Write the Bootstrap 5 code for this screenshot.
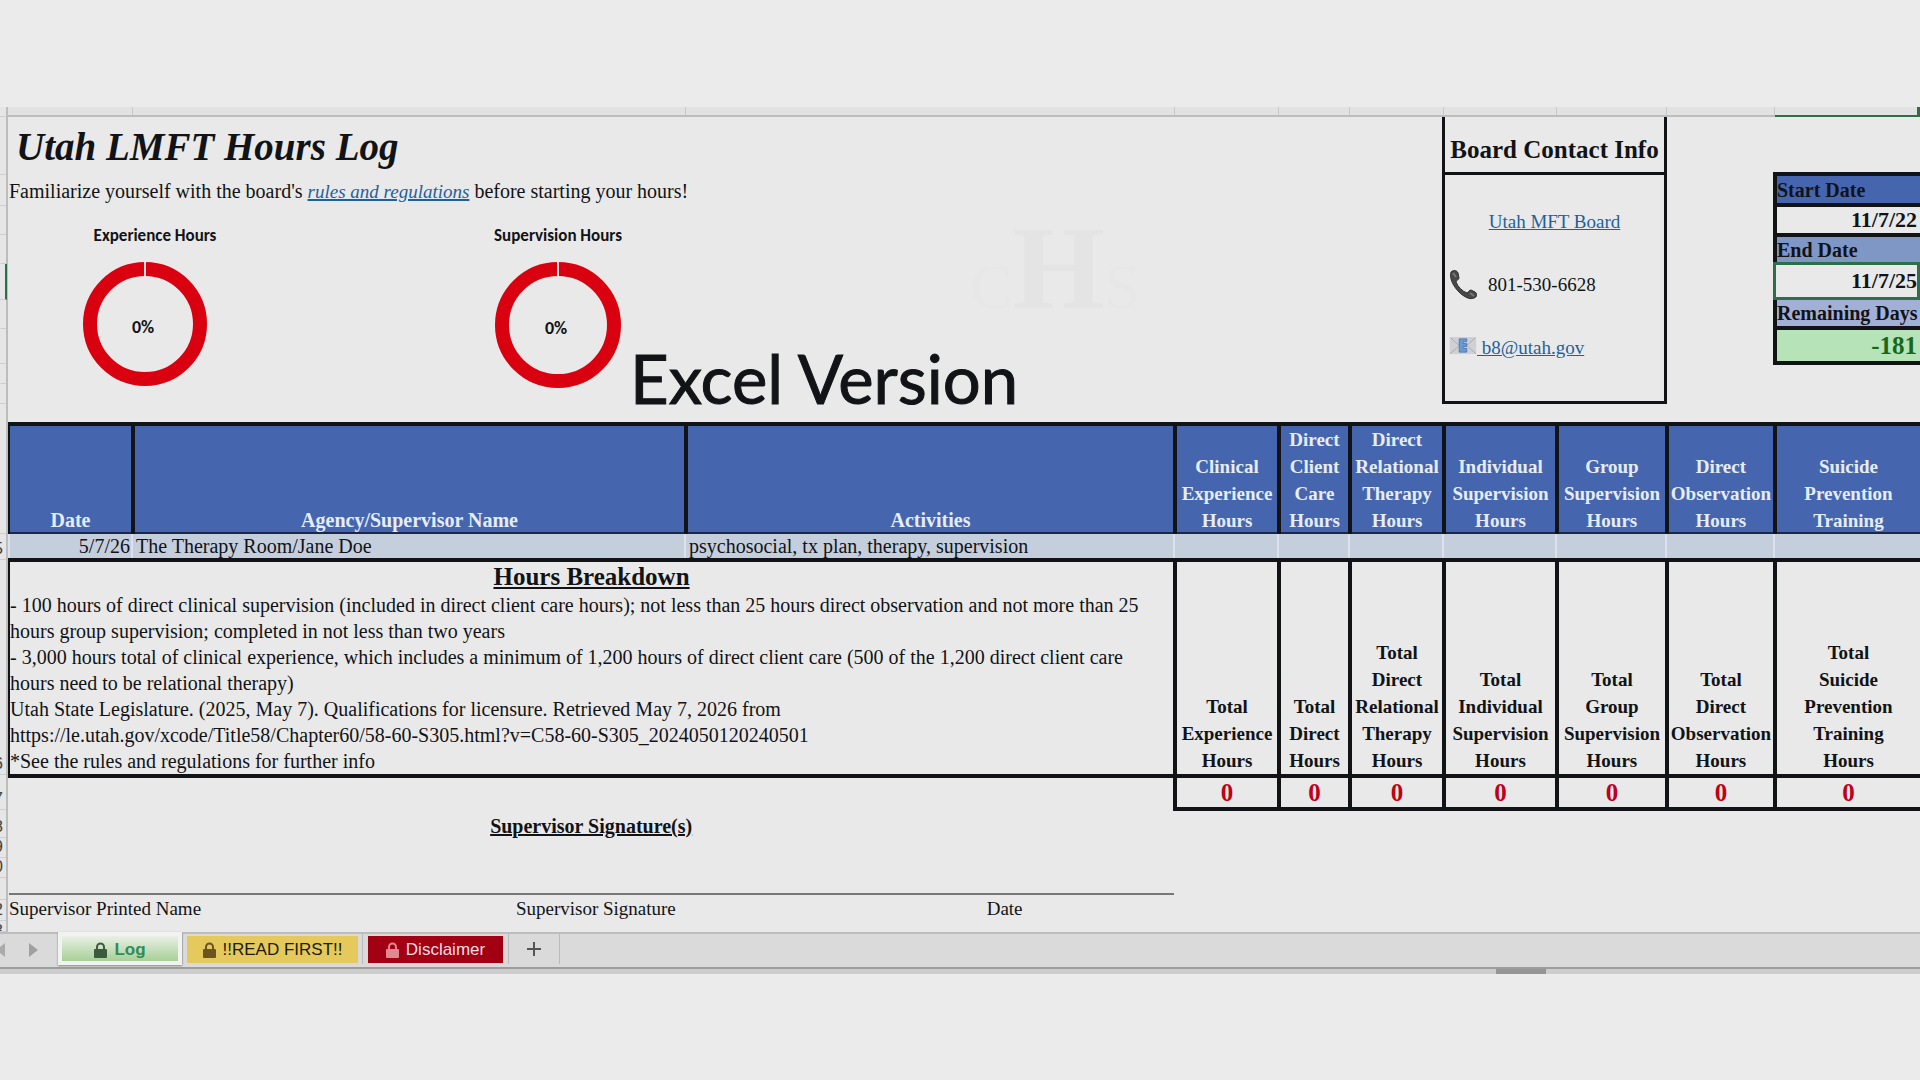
<!DOCTYPE html>
<html lang="en">
<head>
<meta charset="utf-8">
<meta name="viewport" content="width=device-width, initial-scale=1">
<title>Utah LMFT Hours Log</title>
<link href="https://cdn.jsdelivr.net/npm/bootstrap@5.3.0/dist/css/bootstrap.min.css" rel="stylesheet">
<style>
  :root { --ink: #111316; --sheet: #e9e9e9; --blue: #4565ae; --rule: #bdbdbd; --xl-green: #2d7048; --anchor: #1f5f9e; }
  body { background: #ebebeb; color: var(--ink); font-family: "Liberation Serif", serif; font-size: 19px; line-height: 26px; padding-top: 107px; overflow-x: hidden; }
  a { color: var(--anchor); }
  .workbook { background: var(--sheet); }

  /* row-number gutter */
  .gutter { width: 8px; border-right: 2px solid var(--rule); background: #e6e6e6; font: 17px/20px "Liberation Sans", sans-serif; color: #444; }
  .gutter div { display: flex; justify-content: flex-end; align-items: flex-end; overflow: hidden; border-bottom: 1px solid #cfcfcf; padding-right: 3px; }
  .gutter .picked { border-right: 2px solid var(--xl-green); margin-right: -1px; }

  /* shared column tracks */
  .col-strip { display: grid; grid-template-columns: 125fr 553fr 489fr 104fr 71fr 94fr 113fr 110fr 108fr 145fr; height: 10px; background: #e2e2e2; border-bottom: 2px solid var(--rule); }
  .col-strip span { border-right: 1px solid #c8c8c8; }
  .col-strip .picked { border-right: 3px solid var(--xl-green); border-bottom: 2px solid var(--xl-green); margin-bottom: -2px; }
  .top-area { display: grid; grid-template-columns: minmax(0, 1434fr) minmax(0, 225fr) minmax(0, 106fr) minmax(0, 147fr); height: 305px; }

  .sheet-title { font: italic 700 39px/56px "Monotype Corsiva", "Apple Chancery", "Liberation Serif", serif; margin: 0; padding: 2px 0 0 8px; }
  .intro-line { font-size: 20px; padding-left: 1px; margin: 3px 0 0; }
  .intro-line em { font-size: 19px; }
  .charts { padding-left: 75px; padding-top: 18px; }
  .charts figure { margin: 0; }
  .charts figcaption { font: 700 17px/26px Carlito, Lato, sans-serif; display: flex; justify-content: center; white-space: nowrap; }
  .chart-a { width: 144px; margin-right: 268px !important; }
  .chart-b { width: 126px; }
  .charts svg { display: block; margin-top: 13px; }
  .charts svg text { font: 700 18px Carlito, Lato, sans-serif; fill: var(--ink); text-anchor: middle; }
  .version-label { font: 67px/84px Lato, sans-serif; margin: 113px 0 0 9px; white-space: nowrap; -webkit-text-stroke: 1px var(--ink); }
  .watermark { position: absolute; left: 962px; top: 102px; font-size: 64px; line-height: 120px; color: #e7e7e7; }
  .watermark b { font-size: 118px; color: #e4e4e4; }

  .board-box { border: 3px solid var(--ink); border-top: 0; height: 287px; }
  .board-box h2 { font-size: 25px; line-height: 50px; height: 58px; font-weight: 700; text-align: center; margin: 0; padding-top: 8px; border-bottom: 3px solid var(--ink); white-space: nowrap; }
  .board-lines { padding: 34px 4px 0; gap: 37px; }
  .board-lines > * { height: 26px; }
  .phone-number { padding-left: 11px; }

  .dates { margin-top: 55px; width: 100%; border-collapse: separate; border-spacing: 0; font-weight: 700; font-size: 20px; line-height: 24px; }
  .dates th, .dates td { padding: 0 2px 0 0; border: 0 solid var(--ink); border-top-width: 4px; border-left-width: 4px; white-space: nowrap; vertical-align: middle; }
  .dates td { text-align: right; font-size: 22px; padding-right: 3px; }
  .dates .picked { border: 3px solid var(--xl-green); padding-right: 0; }
  .dates .days-left { background: #b6e3b8; color: #16691c; font-size: 25px; border-bottom-width: 4px; }

  /* hours table */
  .hours { width: 100%; table-layout: fixed; border-collapse: separate; border-spacing: 0; }
  .hours th, .hours td { padding: 0; border: 0 solid var(--ink); vertical-align: bottom; }
  .hours th { text-align: center; font-weight: 700; line-height: 27px; border-top-width: 4px; border-left-width: 4px; }
  .hours thead th { background: var(--blue); color: #e6edf8; height: 112px; box-shadow: inset 0 -2px #1a2746; }
  .hours thead .wide-head { font-size: 20px; }
  .hours th:first-child, .hours td:first-child { border-left-width: 2px; }
  .entry td { background: #c5cedd; height: 24px; line-height: 24px; font-size: 20px; border-left: 1px solid #dbe2ec; overflow: hidden; white-space: nowrap; }
  .entry td:first-child { padding-right: 1px; }
  .entry td + td { padding-left: 3px; border-left-width: 2px; }
  .hours .breakdown { border-top-width: 4px; height: 216px; font-size: 20px; }
  .breakdown h2, .sign-title { font-size: 25px; line-height: 30px; font-weight: 700; text-align: center; text-decoration: underline; margin: 0; }
  .breakdown p { margin: 0; }
  .totals td { border-width: 4px 0 4px 4px; height: 37px; text-align: center; vertical-align: middle; color: #c00018; font-weight: 700; font-size: 25px; line-height: 29px; }
  .totals td:first-child { border-width: 4px 0 0; }

  .sign { height: 121px; width: 61%; }
  .sign .sign-title { font-size: 20px; }
  .sign-rule { border-top: 2px solid #777; margin: 52px 0 1px 1px; }
  .sign-cells { padding-left: 1px; }

  /* sheet tabs */
  .tabbar { height: 37px; background: #dadada; border-top: 2px solid var(--rule); border-bottom: 2px solid #9c9c9c; }
  .tabbar button { border: 0; padding: 0; background: none; font: 17px/23px "Liberation Sans", sans-serif; display: flex; align-items: center; justify-content: center; gap: 7px; white-space: nowrap; }
  .tab-slot { border-right: 1px solid #bbb; height: 30px; }
  .tabbar .tab-log { width: 124px; height: 33px; margin-top: -2px; padding-top: 2px; border: 4px solid #f2f2f2; box-shadow: 0 1px 2px #888; background: linear-gradient(#e9f0e4, #a8cf97); color: #318b56; font-weight: 700; }
  .tabbar .tab-read { width: 171px; height: 27px; background: #e5c95d; color: #1c1a10; margin: 2px 4px 0; }
  .tabbar .tab-disc { width: 135px; height: 27px; background: #a20013; color: #f5dfe0; margin: 2px 5px 0; }
  .tabbar .tab-add { width: 50px; height: 30px; }
  .tabbar .nav-arrow { width: 29px; height: 32px; }
  .hscroll { height: 5px; background: #cdcdcd; padding-left: 77.9%; }
  .hscroll div { width: 50px; height: 5px; background: #959595; }
</style>
<script src="https://cdn.jsdelivr.net/npm/bootstrap@5.3.0/dist/js/bootstrap.bundle.min.js"></script>
</head>
<body>
<main class="workbook">
  <div class="d-flex">
    <div class="gutter flex-shrink-0" aria-hidden="true">
      <div style="height:10px"></div><div style="height:58px"></div><div style="height:31px"></div><div style="height:29px"></div><div style="height:29px"></div>
      <div class="picked" style="height:36px"></div><div style="height:29px"></div><div style="height:35px"></div><div style="height:20px"></div><div style="height:20px"></div>
      <div style="height:130px"></div><div style="height:26px">5</div><div style="height:215px">6</div><div style="height:35px">7</div>
      <div style="height:28px">8</div><div style="height:20px">9</div><div style="height:20px">0</div><div style="height:22px"></div><div style="height:21px">2</div><div class="align-items-start" style="height:11px">3</div>
    </div>

    <div class="flex-grow-1 position-relative">
      <div class="col-strip" aria-hidden="true"><span></span><span></span><span></span><span></span><span></span><span></span><span></span><span></span><span></span><span class="picked"></span></div>

      <section class="top-area">
        <div>
          <h1 class="sheet-title">Utah LMFT Hours Log</h1>
          <p class="intro-line">Familiarize yourself with the board's <a href="#rules"><em>rules and regulations</em></a> before starting your hours!</p>
          <div class="charts d-flex align-items-start">
            <figure class="chart-a">
              <figcaption>Experience Hours</figcaption>
              <svg width="124" height="124" viewBox="0 0 124 124" role="img" aria-label="Experience hours 0%">
                <circle cx="62" cy="62" r="55" fill="none" stroke="#d9000f" stroke-width="14"/>
                <path d="M62 0V14" stroke="#f3dcdc" stroke-width="2"/>
                <text x="60" y="71">0%</text>
              </svg>
            </figure>
            <figure class="chart-b">
              <figcaption>Supervision Hours</figcaption>
              <svg width="126" height="126" viewBox="0 0 126 126" role="img" aria-label="Supervision hours 0%">
                <circle cx="63" cy="63" r="56" fill="none" stroke="#d9000f" stroke-width="14"/>
                <path d="M63 0V14" stroke="#f3dcdc" stroke-width="2"/>
                <text x="61" y="72">0%</text>
              </svg>
            </figure>
            <div class="version-label">Excel Version</div>
          </div>
          <div class="watermark" aria-hidden="true">C<b>H</b>S</div>
        </div>

        <div class="board-box">
          <h2>Board Contact Info</h2>
          <div class="board-lines d-flex flex-column">
            <a class="text-center" href="#board">Utah MFT Board</a>
            <div class="d-flex align-items-center">
              <svg width="28" height="30" viewBox="0 0 28 30" aria-hidden="true"><path d="M2 2C4 0 8 0 9 3L10 8C10 10 7 10 7 12C9 17 13 21 18 23C20 22 20 20 22 20L26 22C29 24 28 27 25 28C21 30 15 27 10 22C5 17 0 9 2 2Z" fill="#484848" stroke="#2e2e2e"/><path d="M4 3l3 4M21 23l4 3" stroke="#777" stroke-width="2"/></svg>
              <span class="phone-number">801-530-6628</span>
            </div>
            <a href="mailto:b8@utah.gov"><svg class="align-baseline" width="28" height="17" viewBox="0 0 28 18" aria-hidden="true"><path d="M0 0H28V18H0Z" fill="#d0d0d4"/><path d="M1 1L10 9M27 1L18 9M0 18L9 10M28 18L19 10" stroke="#aaa" fill="none"/><path d="M10 2H18V5H14V7H18V10H14V12H18V16H10Z" fill="#6d9bd0" stroke="#4779b8"/></svg>&nbsp;b8@utah.gov</a>
          </div>
        </div>
        <div></div>
        <div>
          <table class="dates">
            <tr style="height:31px"><th scope="row" style="background:#4565ae">Start Date</th></tr>
            <tr style="height:30px"><td>11/7/22</td></tr>
            <tr style="height:29px"><th scope="row" style="background:#7f97c5">End Date</th></tr>
            <tr style="height:38px"><td class="picked">11/7/25</td></tr>
            <tr style="height:26px"><th scope="row" class="border-top-0" style="background:#a3b0d6">Remaining Days</th></tr>
            <tr style="height:39px"><td class="days-left">-181</td></tr>
          </table>
        </div>
      </section>

      <table class="hours">
        <colgroup>
          <col style="width:6.433%"><col style="width:28.923%"><col style="width:25.575%"><col style="width:5.439%"><col style="width:3.713%"><col style="width:4.916%"><col style="width:5.91%"><col style="width:5.753%"><col style="width:5.649%"><col style="width:7.689%">
        </colgroup>
        <thead>
          <tr>
            <th class="wide-head">Date</th><th class="wide-head">Agency/Supervisor Name</th><th class="wide-head">Activities</th>
            <th>Clinical<br>Experience<br>Hours</th><th>Direct<br>Client<br>Care<br>Hours</th><th>Direct<br>Relational<br>Therapy<br>Hours</th>
            <th>Individual<br>Supervision<br>Hours</th><th>Group<br>Supervision<br>Hours</th><th>Direct<br>Observation<br>Hours</th><th>Suicide<br>Prevention<br>Training</th>
          </tr>
        </thead>
        <tbody>
          <tr class="entry"><td class="text-end">5/7/26</td><td>The Therapy Room/Jane Doe</td><td>psychosocial, tx plan, therapy, supervision</td><td></td><td></td><td></td><td></td><td></td><td></td><td></td></tr>
          <tr>
            <td colspan="3" class="breakdown">
              <h2>Hours Breakdown</h2>
              <p>- 100 hours of direct clinical supervision (included in direct client care hours); not less than 25 hours direct observation and not more than 25<br>hours group supervision; completed in not less than two years</p>
              <p>- 3,000 hours total of clinical experience, which includes a minimum of 1,200 hours of direct client care (500 of the 1,200 direct client care<br>hours need to be relational therapy)</p>
              <p>Utah State Legislature. (2025, May 7). Qualifications for licensure. Retrieved May 7, 2026 from<br>https://le.utah.gov/xcode/Title58/Chapter60/58-60-S305.html?v=C58-60-S305_2024050120240501</p>
              <p>*See the rules and regulations for further info</p>
            </td>
            <th>Total<br>Experience<br>Hours</th><th>Total<br>Direct<br>Hours</th><th>Total<br>Direct<br>Relational<br>Therapy<br>Hours</th>
            <th>Total<br>Individual<br>Supervision<br>Hours</th><th>Total<br>Group<br>Supervision<br>Hours</th><th>Total<br>Direct<br>Observation<br>Hours</th><th>Total<br>Suicide<br>Prevention<br>Training<br>Hours</th>
          </tr>
          <tr class="totals"><td colspan="3"></td><td>0</td><td>0</td><td>0</td><td>0</td><td>0</td><td>0</td><td>0</td></tr>
        </tbody>
      </table>

      <section class="sign">
        <h2 class="sign-title">Supervisor Signature(s)</h2>
        <div class="sign-rule"></div>
        <div class="sign-cells row g-0">
          <div style="width:43.5%">Supervisor Printed Name</div><div style="width:40.4%">Supervisor Signature</div><div class="col">Date</div>
        </div>
      </section>
    </div>
  </div>

  <nav class="tabbar d-flex" aria-label="Sheets">
    <button class="nav-arrow" aria-label="Previous sheet"><svg width="29" height="16" viewBox="0 0 29 16"><path d="M5 1V15L-4 8Z" fill="#aaa"/></svg></button>
    <button class="nav-arrow justify-content-start" aria-label="Next sheet"><svg width="10" height="16" viewBox="0 0 10 16"><path d="M0 1V15L9 8Z" fill="#a0a0a0"/></svg></button>
    <div class="tab-slot"><button class="tab-log"><svg width="13" height="16" viewBox="0 0 13 16"><path d="M3 8V5a3.500 3.500 0 0 1 7 0V8" fill="none" stroke="#3c5a40" stroke-width="2"/><rect y="7" width="13" height="9" rx="1" fill="#3c5a40"/></svg>Log</button></div>
    <div class="tab-slot"><button class="tab-read"><svg width="13" height="16" viewBox="0 0 13 16"><path d="M3 8V5a3.500 3.500 0 0 1 7 0V8" fill="none" stroke="#6b5420" stroke-width="2"/><rect y="7" width="13" height="9" rx="1" fill="#6b5420"/></svg>!!READ FIRST!!</button></div>
    <div class="tab-slot"><button class="tab-disc"><svg width="13" height="16" viewBox="0 0 13 16"><path d="M3 8V5a3.500 3.500 0 0 1 7 0V8" fill="none" stroke="#e08a90" stroke-width="2"/><rect y="7" width="13" height="9" rx="1" fill="#e08a90"/></svg>Disclaimer</button></div>
    <div class="tab-slot"><button class="tab-add" aria-label="Add sheet"><svg width="14" height="14" viewBox="0 0 14 14"><path d="M7 0V14M0 7H14" stroke="#555" stroke-width="2"/></svg></button></div>
  </nav>
  <div class="hscroll"><div></div></div>
</main>
</body>
</html>
